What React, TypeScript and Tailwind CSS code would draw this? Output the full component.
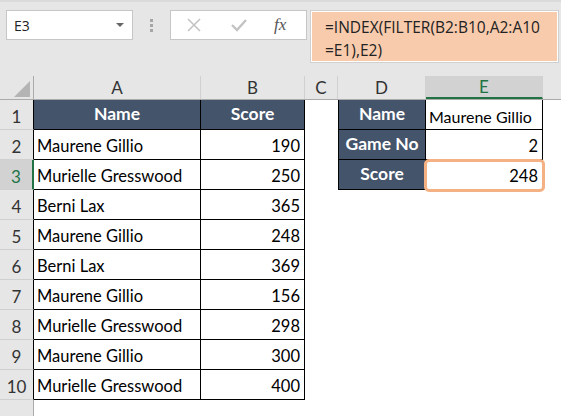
import React from 'react';

const cellFont = { fontFamily: 'Lato, "Open Sans", sans-serif' };

type Row = { name: string; score: number };

const rows: Row[] = [
  { name: 'Maurene Gillio', score: 190 },
  { name: 'Murielle Gresswood', score: 250 },
  { name: 'Berni Lax', score: 365 },
  { name: 'Maurene Gillio', score: 248 },
  { name: 'Berni Lax', score: 369 },
  { name: 'Maurene Gillio', score: 156 },
  { name: 'Murielle Gresswood', score: 298 },
  { name: 'Maurene Gillio', score: 300 },
  { name: 'Murielle Gresswood', score: 400 },
];

const lookup: [string, string][] = [
  ['Name', 'Maurene Gillio'],
  ['Game No', '2'],
  ['Score', '248'],
];

function RowHeader({ n, active }: { n: number; active?: boolean }) {
  return (
    <div
      className={
        'w-[34px] shrink-0 h-full flex items-end justify-center text-[17px] border-b border-b-[#d0d0d0] ' +
        (active
          ? 'bg-[#d2d2d2] text-[#217346] border-r-2 border-r-[#217346]'
          : 'bg-[#e6e6e6] text-[#333] border-r border-r-black')
      }
    >
      {n}
    </div>
  );
}

export default function App() {
  return (
    <div className="w-[561px] h-[416px] overflow-hidden bg-white relative" style={{ fontFamily: '"Open Sans", "Noto Sans", sans-serif' }}>
      {/* formula bar */}
      <div className="h-[76px] bg-[#e6e6e6] border-t-2 border-t-[#dadada] flex items-start pt-[8px] pl-[6px]">
        <div className="w-[127px] h-[30px] bg-white border border-[#c6c6c6] flex items-center justify-between pl-[7px] pr-[8px]">
          <span className="text-[14px] text-[#222]">E3</span>
          <span className="w-0 h-0 border-l-[4px] border-r-[4px] border-t-[4px] border-l-transparent border-r-transparent border-t-[#666]" />
        </div>
        <div className="w-[37px] h-[30px] flex flex-col items-center justify-center gap-[2px]">
          <span className="w-[3px] h-[3px] bg-[#a6a6a6]" />
          <span className="w-[3px] h-[3px] bg-[#a6a6a6]" />
          <span className="w-[3px] h-[3px] bg-[#a6a6a6]" />
        </div>
        <div className="w-[137px] h-[30px] bg-white border border-[#c6c6c6] flex items-center">
          <svg width="16" height="16" viewBox="0 0 16 16" className="ml-[15px]">
            <path d="M2 2 L14 14 M14 2 L2 14" stroke="#c3c3c3" strokeWidth="1.6" />
          </svg>
          <svg width="18" height="16" viewBox="0 0 18 16" className="ml-[28px]">
            <path d="M2 8 L7 13 L16 3" stroke="#c3c3c3" strokeWidth="2.4" fill="none" />
          </svg>
          <span className="ml-[26px] text-[17px] italic text-[#555]" style={{ fontFamily: '"Liberation Serif", serif' }}>
            fx
          </span>
        </div>
        <div className="ml-[3px] w-[249px] h-[53px] bg-white border border-[#d0d0d0] p-[1px]">
          <div className="w-full h-full bg-[#f8cbad] pl-[13px] pt-[4px] text-[15.5px] leading-[23px] text-[#222]">
            =INDEX(FILTER(B2:B10,A2:A10
            <br />
            =E1),E2)
          </div>
        </div>
      </div>

      {/* column headers */}
      <div className="flex h-[24px] bg-[#e6e6e6] border-b border-b-[#ababab] text-[17px] text-[#333]" style={cellFont}>
        <div className="w-[34px] shrink-0 border-r border-r-[#ababab] flex items-end justify-end pr-[3px] pb-[2px]">
          <svg width="16" height="16" viewBox="0 0 16 16">
            <path d="M16 0 L16 16 L0 16 Z" fill="#b4b4b4" />
          </svg>
        </div>
        <div className="w-[167px] shrink-0 border-r border-r-[#d0d0d0] flex items-center justify-center">A</div>
        <div className="w-[104px] shrink-0 border-r border-r-[#d0d0d0] flex items-center justify-center">B</div>
        <div className="w-[33px] shrink-0 border-r border-r-[#d0d0d0] flex items-center justify-center">C</div>
        <div className="w-[88px] shrink-0 border-r border-r-[#d0d0d0] flex items-center justify-center">D</div>
        <div className="w-[117px] shrink-0 bg-[#d2d2d2] border-r border-r-[#d0d0d0] border-b-2 border-b-[#217346] text-[#217346] flex items-center justify-center">E</div>
        <div className="flex-1" />
      </div>

      {/* grid */}
      <div className="text-[16.5px] text-black" style={cellFont}>
        {/* header row 1 */}
        <div className="flex h-[30px]">
          <RowHeader n={1} />
          <div className="w-[167px] shrink-0 bg-[#44546a] border-r border-b border-black text-white text-[17.5px] font-bold flex items-center justify-center">
            Name
          </div>
          <div className="w-[104px] shrink-0 bg-[#44546a] border-r border-b border-black text-white text-[17.5px] font-bold flex items-center justify-center">
            Score
          </div>
          <div className="w-[33px] shrink-0" />
          <div className="w-[88px] shrink-0 bg-[#44546a] border-l border-r border-b border-black text-white text-[17.5px] font-bold flex items-center justify-center">
            {lookup[0][0]}
          </div>
          <div className="w-[117px] shrink-0 border-r border-b border-black flex items-end pl-[3px] text-[16px]">{lookup[0][1]}</div>
          <div className="flex-1" />
        </div>
        {rows.map((r, i) => {
          const n = i + 2;
          const lk = lookup[n - 1];
          return (
            <div key={n} className="flex h-[30px]">
              <RowHeader n={n} active={n === 3} />
              <div className="w-[167px] shrink-0 border-r border-b border-black flex items-end pl-[3px]">{r.name}</div>
              <div className="w-[104px] shrink-0 border-r border-b border-black flex items-end justify-end pr-[4px]">{r.score}</div>
              <div className="w-[33px] shrink-0" />
              {lk ? (
                <>
                  <div className="w-[88px] shrink-0 bg-[#44546a] border-l border-r border-b border-black text-white text-[17.5px] font-bold flex items-center justify-center whitespace-nowrap">
                    {lk[0]}
                  </div>
                  <div className="w-[117px] shrink-0 border-r border-b border-black flex items-end justify-end pr-[4px]">{lk[1]}</div>
                </>
              ) : (
                <div className="w-[205px] shrink-0" />
              )}
              <div className="flex-1" />
            </div>
          );
        })}
        <div className="flex h-[20px]">
          <div className="w-[34px] shrink-0 h-full bg-[#e6e6e6] border-r border-r-[#ababab]" />
        </div>
      </div>

      {/* selection highlight on E3 */}
      <div className="absolute left-[424px] top-[159px] w-[121px] h-[33px] border-[3px] border-[#f4b183] rounded-[5px]" />
    </div>
  );
}
